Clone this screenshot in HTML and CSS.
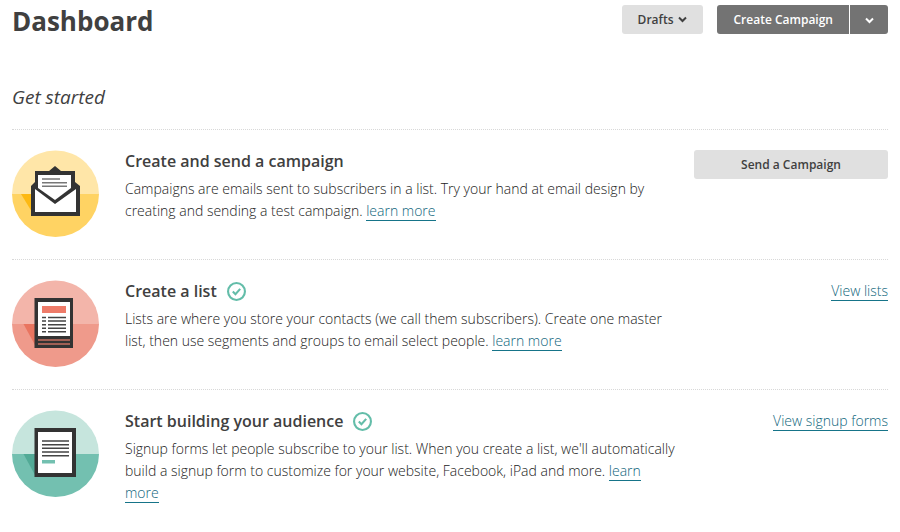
FILE: index.html
```html
<!DOCTYPE html>
<html lang="en">
<head>
    <meta charset="UTF-8">
    <title>Dashboard</title>
    <link rel="stylesheet" href="styles.css">
</head>
<body>
    <header class="top">
        <h1>Dashboard</h1>
        <div class="actions">
            <button type="button" class="btn drafts">Drafts
                <svg class="arrow" viewBox="0 0 9 7"><path d="M1 1.5L4.5 5 8 1.5"/></svg>
            </button>
            <div class="split">
                <button type="button" class="btn dark">Create Campaign</button>
                <button type="button" class="btn dark more" aria-label="More options">
                    <svg class="arrow" viewBox="0 0 9 7"><path d="M1 1.5L4.5 5 8 1.5"/></svg>
                </button>
            </div>
        </div>
    </header>
    <main>
        <h2>Get started</h2>
        <ul class="steps">
            <li>
                <svg class="icon" viewBox="0 0 87 87">
                    <path fill="#ffe6a8" d="M0 44a43.5 43.5 0 0 1 87 0z"/>
                    <path fill="#ffd363" d="M0 44a43.5 43 0 0 0 87 0z"/>
                    <path fill="#fdb913" d="M9 44h11v18z"/>
                    <path fill="#333" d="M19 36l4-4V21h14l6-5 6 5h14v11l5 4v30H19z"/>
                    <path fill="#fff" d="M26 25h33v13L43 50 26 38z"/>
                    <path fill="#fff" d="M23 39l20 15 21-15v23H23z"/>
                    <path stroke="#777" stroke-width="1.5" d="M30 29h18M30 32.7h25M30 36.3h25"/>
                </svg>
                <div class="text">
                    <h3>Create and send a campaign</h3>
                    <p>Campaigns are emails sent to subscribers in a list. Try your hand at email design by creating and sending a test campaign. <a href="#">learn more</a></p>
                </div>
                <div class="side"><button type="button" class="btn wide">Send a Campaign</button></div>
            </li>
            <li>
                <svg class="icon" viewBox="0 0 87 87">
                    <path fill="#f3b5aa" d="M0 44a43.5 43.5 0 0 1 87 0z"/>
                    <path fill="#ef9a8b" d="M0 44a43.5 43 0 0 0 87 0z"/>
                    <path fill="#e97560" d="M11.5 44H23v21z"/>
                    <path fill="#333" d="M22.5 18H61v50H22.5z"/>
                    <path fill="#fff" d="M26 22h32v34H26z"/>
                    <path fill="#ee7b69" d="M30 26h24v7H30z"/>
                    <path stroke="#444" stroke-width="1.5" d="M30 37.5h4M36 37.5h18M30 41h4M36 41h18M30 44.7h4M36 44.7h18M30 48.3h4M36 48.3h18M30 51.8h4M36 51.8h18"/>
                    <path stroke="#c56f60" stroke-width="1.5" d="M26 60h32M26 64h32"/>
                </svg>
                <div class="text">
                    <h3>Create a list
                        <svg class="done" viewBox="0 0 18 18"><circle cx="9" cy="9" r="8"/><path d="M5.5 9L8 11.5 12.5 6.5"/></svg>
                    </h3>
                    <p>Lists are where you store your contacts (we call them subscribers). Create one master list, then use segments and groups to email select people. <a href="#">learn more</a></p>
                </div>
                <div class="side"><a href="#">View lists</a></div>
            </li>
            <li>
                <svg class="icon" viewBox="0 0 87 87">
                    <path fill="#c6e5dd" d="M0 44a43.5 43.5 0 0 1 87 0z"/>
                    <path fill="#73c0b0" d="M0 44a43.5 43 0 0 0 87 0z"/>
                    <path fill="#52aa96" d="M11.5 44H23v21z"/>
                    <path fill="#333" d="M22.5 18H64v49H22.5z"/>
                    <path fill="#fff" d="M26 22h34v41H26z"/>
                    <path stroke="#444" stroke-width="1.5" d="M30 31h27M30 34.7h27M30 38.3h27M30 42h27M30 45.7h27"/>
                    <path fill="#73c0b0" d="M30 50h13v3.5H30z"/>
                </svg>
                <div class="text">
                    <h3>Start building your audience
                        <svg class="done" viewBox="0 0 18 18"><circle cx="9" cy="9" r="8"/><path d="M5.5 9L8 11.5 12.5 6.5"/></svg>
                    </h3>
                    <p>Signup forms let people subscribe to your list. When you create a list, we'll automatically build a signup form to customize for your website, Facebook, iPad and more. <a href="#">learn more</a></p>
                </div>
                <div class="side"><a href="#">View signup forms</a></div>
            </li>
        </ul>
    </main>
</body>
</html>
```
FILE: styles.css
```css
* {
    margin: 0;
    padding: 0;
    box-sizing: border-box;
    list-style: none;
}
body{
    padding: 5px 12px;
    background: #fff;
    color: #404040;
    font: 300 14px/22px "Open Sans", sans-serif;
}
.top{
    display: flex;
    justify-content: space-between;
    align-items: flex-start;
}
h1{
    font-size: 26px;
    line-height: 32px;
    font-weight: 700;
}
h2{
    margin-top: 45px;
    font-size: 19px;
    line-height: 30px;
    font-weight: 400;
    font-style: italic;
}
h3{
    display: flex;
    align-items: center;
    gap: 10px;
    margin-bottom: 6px;
    font-size: 16px;
    line-height: 22px;
    font-weight: 600;
}
p{
    color: #222;
}
a{
    color: #0f667c;
    text-decoration: none;
    border-bottom: 1px solid #167489;
}
.actions{
    display: flex;
    gap: 14px;
}
.split{
    display: flex;
    gap: 1px;
}
.btn{
    height: 29px;
    padding: 0 16px;
    border: 0;
    border-radius: 3px;
    background: #e0e0e0;
    color: #404040;
    font: 600 12px/29px "Open Sans", sans-serif;
}
.drafts{
    display: flex;
    align-items: center;
    gap: 5px;
}
.dark{
    border-radius: 3px 0 0 3px;
    background: #737373;
    color: #fff;
}
.more{
    width: 38px;
    padding: 0;
    border-radius: 0 3px 3px 0;
}
.wide{
    width: 100%;
}
.arrow{
    width: 9px;
    height: 7px;
    fill: none;
    stroke: currentColor;
    stroke-width: 2;
}
.steps{
    margin-top: 17px;
}
.steps li{
    display: flex;
    min-height: 130px;
    padding-top: 20px;
    border-top: 1px dotted #d8d8d8;
}
.icon{
    flex: none;
    width: 87px;
    height: 87px;
    margin-right: 26px;
}
.text{
    flex: 1;
    margin-right: 17px;
}
.done{
    width: 19px;
    height: 19px;
    fill: none;
    stroke: #63bda9;
    stroke-width: 2;
}
.side{
    width: 194px;
    text-align: right;
}
```
